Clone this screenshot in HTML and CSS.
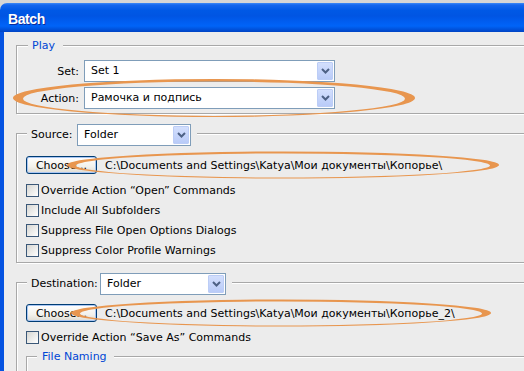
FILE: index.html
```html
<!DOCTYPE html>
<html>
<head>
<meta charset="utf-8">
<title>Batch</title>
<link rel="stylesheet" href="styles.css">
</head>
<body>
<div class="window">
  <div class="titlebar"><span class="title">Batch</span></div>
  <div class="client">
    <fieldset class="group play">
      <legend class="caption">Play</legend>
      <div class="row">
        <span class="lbl">Set:</span>
        <div class="select w-play"><span class="val">Set 1</span><span class="drop"><svg width="9" height="6" viewBox="0 0 9 6"><polyline points="1,1 4.5,4.5 8,1" fill="none" stroke="#4d6185" stroke-width="2"/></svg></span></div>
      </div>
      <div class="row">
        <span class="lbl">Action:</span>
        <div class="select w-play"><span class="val">Рамочка и подпись</span><span class="drop"><svg width="9" height="6" viewBox="0 0 9 6"><polyline points="1,1 4.5,4.5 8,1" fill="none" stroke="#4d6185" stroke-width="2"/></svg></span></div>
      </div>
    </fieldset>

    <fieldset class="group source">
      <legend class="head">
        <span class="hlbl w-src-lbl">Source:</span>
        <div class="select w-src"><span class="val">Folder</span><span class="drop"><svg width="9" height="6" viewBox="0 0 9 6"><polyline points="1,1 4.5,4.5 8,1" fill="none" stroke="#4d6185" stroke-width="2"/></svg></span></div>
      </legend>
      <div class="choose-row">
        <button class="btn">Choose...</button>
        <span class="path">C:\Documents and Settings\Katya\Мои документы\Копорье\</span>
      </div>
      <div class="checks">
        <div class="check"><span class="box"></span><span>Override Action “Open” Commands</span></div>
        <div class="check"><span class="box"></span><span>Include All Subfolders</span></div>
        <div class="check"><span class="box"></span><span>Suppress File Open Options Dialogs</span></div>
        <div class="check"><span class="box"></span><span>Suppress Color Profile Warnings</span></div>
      </div>
    </fieldset>

    <fieldset class="group dest">
      <legend class="head">
        <span class="hlbl w-dst-lbl">Destination:</span>
        <div class="select w-dst"><span class="val">Folder</span><span class="drop"><svg width="9" height="6" viewBox="0 0 9 6"><polyline points="1,1 4.5,4.5 8,1" fill="none" stroke="#4d6185" stroke-width="2"/></svg></span></div>
      </legend>
      <div class="choose-row">
        <button class="btn">Choose...</button>
        <span class="path">C:\Documents and Settings\Katya\Мои документы\Копорье_2\</span>
      </div>
      <div class="checks dest-checks">
        <div class="check"><span class="box"></span><span>Override Action “Save As” Commands</span></div>
      </div>
      <fieldset class="group sub">
        <legend class="caption sub-caption">File Naming</legend>
      </fieldset>
    </fieldset>
  </div>
</div>

<svg class="marks" width="524" height="371" viewBox="0 0 524 371">
  <path fill="#e8964f" fill-rule="evenodd" d="M13,98 a201,19 0 1,0 402,0 a201,19 0 1,0 -402,0 Z M23,98.7 a191,17.2 0 1,0 382,0 a191,17.2 0 1,0 -382,0 Z"/>
  <path fill="#e8964f" fill-rule="evenodd" d="M67,165 a216,13.5 0 1,0 432,0 a216,13.5 0 1,0 -432,0 Z M76,165.5 a207,12 0 1,0 414,0 a207,12 0 1,0 -414,0 Z"/>
  <path fill="#e8964f" fill-rule="evenodd" d="M71,313 a210,13.5 0 1,0 420,0 a210,13.5 0 1,0 -420,0 Z M80,313.5 a201,12 0 1,0 402,0 a201,12 0 1,0 -402,0 Z"/>
</svg>
</body>
</html>
```

FILE: styles.css
```css
html, body {
  margin: 0;
  padding: 0;
}

body {
  width: 524px;
  height: 371px;
  overflow: hidden;
  position: relative;
  background: #d6d6d6;
  font-family: "DejaVu Sans", "Noto Sans", sans-serif;
  font-size: 11px;
  color: #000;
}

.window {
  width: 640px;
  margin-top: 3px;
}

.titlebar {
  height: 29px;
  box-sizing: border-box;
  padding: 8px 0 0 8px;
  border-top-left-radius: 7px;
  background: linear-gradient(#3d8af7 0, #1466ee 2px, #0059e6 7px, #0055e3 13px, #005ef1 19px, #0064f8 23px, #0054de 26px, #0043c4 29px);
}

.title {
  display: block;
  color: #fff;
  font-family: "Liberation Sans", Arial, sans-serif;
  font-weight: bold;
  font-size: 14px;
  line-height: 16px;
  letter-spacing: -0.4px;
  text-shadow: 1px 1px 0 #0a2a9a;
}

.client {
  background: #ececec;
  border-left: 4px solid #0553e1;
  height: 345px;
  padding-top: 7px;
  box-sizing: border-box;
}

.group {
  margin: 0 0 0 12px;
  padding: 0;
  min-width: 0;
  border: 1px solid #a8a8a8;
  box-shadow: 1px 1px 0 #fff, inset 1px 1px 0 #fff;
}

.caption {
  margin-left: 11px;
  padding: 0 8px 0 4px;
  line-height: 13px;
  color: #0046d5;
  background: #ececec;
}

.play {
  padding: 8px 0 4px 0;
}

.row {
  display: flex;
  align-items: center;
  height: 22px;
}

.row + .row {
  margin-top: 5px;
}

.lbl {
  width: 62px;
  margin-right: 5px;
  text-align: right;
}

.select {
  display: flex;
  align-items: stretch;
  height: 22px;
  box-sizing: border-box;
  border: 1px solid #7f9db9;
  background: #fff;
  padding: 1px 1px 1px 6px;
}

.select .val {
  flex: 1;
  line-height: 18px;
  white-space: nowrap;
}

.drop {
  width: 16px;
  box-sizing: border-box;
  border: 1px solid #bccdf6;
  border-radius: 1px;
  background: linear-gradient(#d3dffd, #b9cbf8);
  display: flex;
  align-items: center;
  justify-content: center;
}

.drop svg {
  display: block;
}

.w-play {
  width: 251px;
}

.source {
  margin-top: 10px;
  padding: 13px 0 1px 0;
}

.dest {
  margin-top: 10px;
  padding: 12px 0 40px 0;
}

.head {
  display: flex;
  align-items: flex-start;
  height: 19px;
  margin-left: 10px;
  padding: 0 6px 0 4px;
  background: #ececec;
}

.hlbl {
  line-height: 22px;
}

.w-src-lbl {
  width: 46px;
}

.w-src {
  width: 114px;
}

.w-dst-lbl {
  width: 69px;
}

.w-dst {
  width: 126px;
}

.choose-row {
  display: flex;
  align-items: center;
  height: 18px;
  padding-left: 9px;
}

.btn {
  width: 71px;
  height: 18px;
  padding: 0;
  margin: 0;
  font-family: inherit;
  font-size: 11px;
  color: #000;
  border: 1px solid #003c74;
  border-radius: 3px;
  background: linear-gradient(#ffffff, #f2f1ec 60%, #dedbd2);
  box-shadow: inset 0 0 0 1px #a9c6f2;
}

.path {
  margin-left: 8px;
  white-space: nowrap;
}

.checks {
  margin-top: 7px;
  padding-left: 9px;
}

.dest-checks {
  margin-top: 6px;
}

.check {
  display: flex;
  align-items: flex-start;
  height: 20px;
  line-height: 19px;
  white-space: nowrap;
}

.box {
  width: 13px;
  height: 13px;
  box-sizing: border-box;
  margin-top: 3px;
  margin-right: 2px;
  border: 1px solid #3b5878;
  background: linear-gradient(135deg, #d6d6d2, #ffffff);
  flex: none;
}

.sub {
  margin: 2px 0 0 9px;
  height: 60px;
}

.sub-caption {
  margin-left: 10px;
  padding: 0 7px 0 5px;
}

.marks {
  position: absolute;
  left: 0;
  top: 0;
  pointer-events: none;
}
```
